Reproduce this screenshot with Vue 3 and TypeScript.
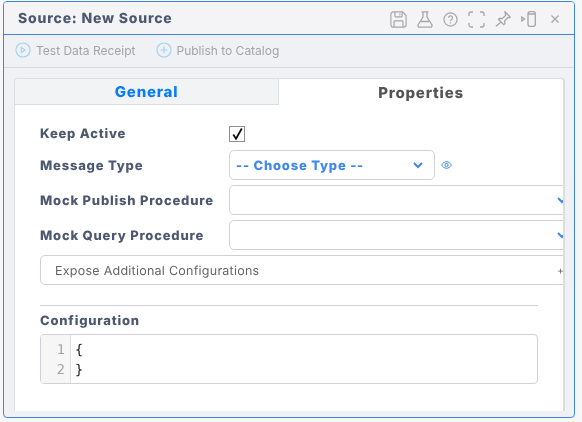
<script setup lang="ts">
const rows = [
  { label: 'Mock Publish Procedure' },
  { label: 'Mock Query Procedure' },
]
</script>

<template>
  <div class="window">
    <header class="head">
      <h1 class="title">Source: New Source</h1>
      <div class="head-icons">
        <svg width="17" height="17" viewBox="0 0 19 19" class="ic">
          <path d="M3.500 1h10.500l4 4v10.500a2.500 2.500 0 0 1-2.500 2.500h-12a2.500 2.500 0 0 1-2.500-2.500v-12a2.500 2.500 0 0 1 2.500-2.500z" />
          <path d="M5.500 1v4.500a1 1 0 0 0 1 1h6a1 1 0 0 0 1-1V1M11 2.800v2M4.500 18v-6a1 1 0 0 1 1-1h8a1 1 0 0 1 1 1v6" />
        </svg>
        <svg width="16" height="17" viewBox="0 0 16 17" class="ic">
          <path d="M4.500.8h7M6 .8v5.200L1.300 13.500A1.700 1.700 0 0 0 2.800 16.200h10.400a1.700 1.700 0 0 0 1.500-2.700L10 6V.8" />
          <path d="M3.800 10.500h8.400" />
        </svg>
        <svg width="15" height="15" viewBox="0 0 16 16" class="ic">
          <circle cx="8" cy="8" r="7" />
          <path d="M5.900 6.200a2.100 2.100 0 1 1 3.300 1.700c-.8.5-1.200.9-1.200 1.700" />
          <path d="M8 11v1.200" />
        </svg>
        <svg width="17" height="17" viewBox="0 0 17 17" class="ic">
          <path d="M1 5V3a2 2 0 0 1 2-2h2M12 1h2a2 2 0 0 1 2 2v2M16 12v2a2 2 0 0 1-2 2h-2M5 16H3a2 2 0 0 1-2-2v-2" />
        </svg>
        <svg width="16" height="16" viewBox="0 0 16 16" class="ic">
          <path d="M10 .8l5.200 5.200-1.200.8-1-.3-3.400 3.400.3 2.500-1.200 1.200L3.600 8.500l1.200-1.200 2.500.3 3.400-3.400-.3-1z" />
          <path d="M6.200 11.100L.8 15.200" />
        </svg>
        <svg width="15" height="16" viewBox="0 0 15 16" class="ic">
          <rect x="7" y=".7" width="7.300" height="14.600" rx="2" />
          <path d="M7 3h7.300" />
          <path d="M.8 6l2.800 2-2.800 2z" />
        </svg>
        <svg width="8" height="8" viewBox="0 0 8 8" class="ic close">
          <path d="M.5.5l7 7M7.500.5l-7 7" />
        </svg>
      </div>
    </header>

    <div class="toolbar">
      <button class="tool" type="button">
        <svg width="16" height="16" viewBox="0 0 17 17" class="tool-ic">
          <circle cx="8.500" cy="8.500" r="7.500" />
          <path d="M6.700 5.800l4 2.700-4 2.700z" />
        </svg>
        Test Data Receipt
      </button>
      <button class="tool" type="button">
        <svg width="16" height="16" viewBox="0 0 17 17" class="tool-ic">
          <circle cx="8.500" cy="8.500" r="7.500" />
          <path d="M8.500 4.800v7.400M4.800 8.500h7.400" />
        </svg>
        Publish to Catalog
      </button>
    </div>

    <section class="panel">
      <div class="tabs">
        <div class="tab tab-off">General</div>
        <div class="tab tab-on">Properties</div>
      </div>

      <div class="body">
        <div class="row row-check">
          <label class="label label-check">Keep Active</label>
          <span class="check">
            <svg width="13" height="14" viewBox="0 0 13 14">
              <path d="M2.300 7.600l2.700 4.200L10.800 1.500" />
            </svg>
          </span>
        </div>

        <div class="row">
          <label class="label">Message Type</label>
          <div class="select select-short">
            <span class="select-text">-- Choose Type --</span>
            <svg width="10" height="7" viewBox="0 0 10 7" class="chev">
              <path d="M1 1l4 4 4-4" />
            </svg>
          </div>
          <svg width="11" height="8" viewBox="0 0 11 8" class="eye">
            <path d="M.6 4C2 1.800 3.600.7 5.500.7S9 1.800 10.400 4C9 6.200 7.400 7.300 5.500 7.300S2 6.200.6 4z" />
            <circle cx="5.500" cy="4" r="1.600" />
          </svg>
        </div>

        <div v-for="row in rows" :key="row.label" class="row">
          <label class="label">{{ row.label }}</label>
          <div class="select select-wide">
            <svg width="10" height="7" viewBox="0 0 10 7" class="chev">
              <path d="M1 1l4 4 4-4" />
            </svg>
          </div>
        </div>

        <div class="expose">
          <span>Expose Additional Configurations</span>
          <span class="plus">+</span>
        </div>

        <hr class="rule" />

        <div class="config-label">Configuration</div>
        <div class="editor">
          <div class="gutter">
            <div>1</div>
            <div>2</div>
          </div>
          <div class="code">
            <div>{</div>
            <div>}</div>
          </div>
        </div>
      </div>
    </section>
  </div>
</template>

<style>
html,
body {
  margin: 0;
  background: #f6f7f9;
}
</style>

<style scoped>
.window {
  box-sizing: border-box;
  width: 572px;
  height: 417px;
  margin: 1px 0 0 3px;
  border: 1px solid #4285e8;
  border-radius: 4px;
  background: #f0f1f5;
  font-family: Inter, sans-serif;
  text-rendering: geometricPrecision;
  will-change: transform;
  overflow: hidden;
}

.head {
  box-sizing: border-box;
  height: 33px;
  display: flex;
  align-items: center;
  justify-content: space-between;
  padding: 0 15px 0 14px;
  background: #f4f4f6;
  border-bottom: 1px solid #4285e8;
}

.title {
  margin: 0;
  font-size: 14px;
  font-weight: 800;
  letter-spacing: 0.800px;
  color: #4c5870;
}

.head-icons {
  display: flex;
  align-items: center;
  gap: 10px;
  margin-top: 2px;
}

.ic {
  fill: none;
  stroke: #a6a6a6;
  stroke-width: 1.300;
}

.close {
  margin-left: 5px;
}

.toolbar {
  box-sizing: border-box;
  height: 33px;
  display: flex;
  align-items: center;
  gap: 20px;
  padding: 0 11px 2px;
  border-bottom: 1px solid #d8d9dd;
}

.tool {
  display: flex;
  align-items: center;
  gap: 5px;
  padding: 0;
  border: 0;
  background: none;
  font: 400 12px Inter, sans-serif;
  color: #a4a4a4;
}

.tool-ic {
  fill: none;
  stroke: #a3cff6;
  stroke-width: 1.200;
}

.panel {
  box-sizing: border-box;
  width: 551px;
  height: 333px;
  margin: 10px 0 0 10px;
  border: 1px solid #dcdde1;
  border-right-width: 2px;
  border-bottom: 0;
  border-radius: 4px 4px 0 0;
  background: #fff;
}

.tabs {
  display: flex;
  height: 26px;
}

.tab {
  display: flex;
  align-items: center;
  justify-content: center;
  font-size: 15px;
  font-weight: 800;
  letter-spacing: 0.800px;
}

.tab-off {
  width: 264px;
  box-sizing: border-box;
  color: #0a7cf5;
  background: #f2f3f5;
  border-bottom: 1px solid #dcdde1;
  border-right: 1px solid #dcdde1;
  border-radius: 4px 0 0 0;
}

.tab-on {
  flex: 1;
  color: #555;
}

.body {
  padding: 14px 0 0 25px;
  overflow: hidden;
  height: 293px;
  box-sizing: border-box;
}

.row {
  display: flex;
  align-items: center;
  height: 30px;
  margin-bottom: 5px;
}

.row-check {
  margin-bottom: 1px;
}

.label {
  width: 189px;
  flex-shrink: 0;
  padding-top: 2px;
  font-size: 13px;
  font-weight: 800;
  letter-spacing: 0.800px;
  color: #4c5870;
}

.label-check {
  padding-top: 0;
}

.check {
  box-sizing: border-box;
  width: 16px;
  height: 16px;
  display: flex;
  align-items: center;
  justify-content: center;
  background: #fff;
  border: 1px solid #8f8f8f;
}

.check svg {
  fill: none;
  stroke: #111;
  stroke-width: 1.800;
}

.select {
  box-sizing: border-box;
  height: 30px;
  flex-shrink: 0;
  display: flex;
  align-items: center;
  justify-content: space-between;
  padding: 0 11px 0 6px;
  background: #fff;
  border: 1px solid #d0d1d8;
  border-radius: 5px;
}

.select-short {
  width: 206px;
}

.select-wide {
  width: 350px;
  justify-content: flex-end;
}

.select-text {
  padding-top: 2px;
  font-size: 13px;
  font-weight: 800;
  letter-spacing: 0.800px;
  color: #3d87ee;
}

.chev {
  fill: none;
  stroke: #3d87ee;
  stroke-width: 2;
}

.eye {
  margin-left: 6px;
  fill: none;
  stroke: #3d87ee;
  stroke-width: 1;
}

.expose {
  box-sizing: border-box;
  width: 530px;
  height: 30px;
  display: flex;
  align-items: center;
  justify-content: space-between;
  padding: 2px 8px 0 14px;
  border: 1px solid #d0d1d8;
  border-radius: 5px;
  font-size: 12.500px;
  letter-spacing: 0.250px;
  color: #666;
}

.plus {
  font-size: 10px;
  margin-right: -3px;
}

.rule {
  width: 498px;
  margin: 20px 0 0;
  border: 0;
  border-top: 1px solid #d0d1d8;
}

.config-label {
  margin-top: 7px;
  font-size: 13px;
  font-weight: 800;
  letter-spacing: 0.800px;
  color: #4c5870;
}

.editor {
  box-sizing: border-box;
  width: 498px;
  height: 50px;
  margin-top: 5px;
  display: flex;
  border: 1px solid #d0d1d8;
  border-radius: 4px;
  overflow: hidden;
  font-family: "DejaVu Sans Mono", monospace;
  font-size: 13.500px;
  line-height: 20px;
}

.gutter {
  box-sizing: border-box;
  width: 30px;
  padding: 5px 5px 0 0;
  text-align: right;
  background: #f6f6f6;
  border-right: 1px solid #dcdcdc;
  color: #a3a3a3;
}

.code {
  padding: 5px 0 0 4px;
  color: #111;
}
</style>
